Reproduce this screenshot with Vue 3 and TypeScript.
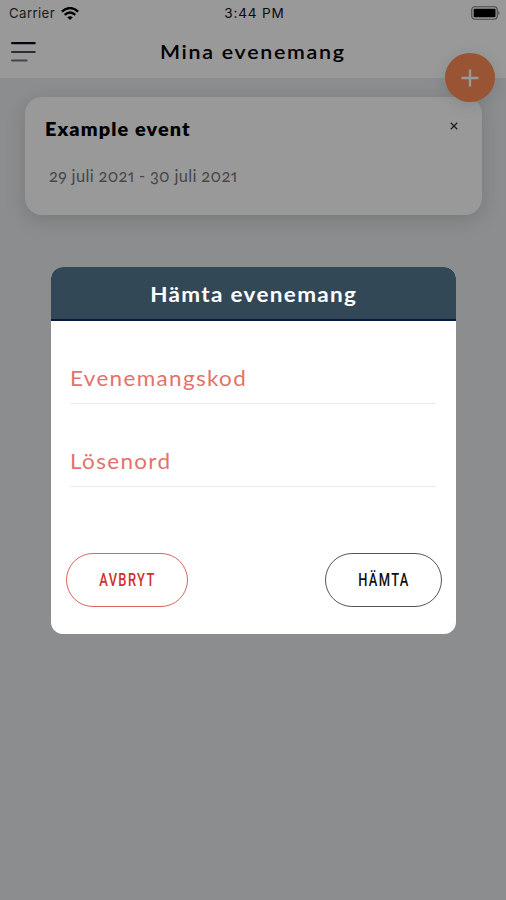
<script setup lang="ts">
import { ref } from 'vue'

interface EventItem {
  name: string
  period: string
}

const events = ref<EventItem[]>([{ name: 'Example event', period: '29 juli 2021 - 30 juli 2021' }])
const fields: string[] = ['Evenemangskod', 'Lösenord']
</script>

<template>
  <main class="screen">
    <div class="status">
      <div class="carrier">
        <span>Carrier</span>
        <svg width="18" height="13" viewBox="0 0 18 13" fill="none" stroke="#000" stroke-width="2.3">
          <path d="M.8 4.7Q9-2.6 17.2 4.7M3.7 7.9Q9 3.2 14.3 7.9" />
          <path d="M6.2 10.3Q9 8 11.8 10.3L9 13Z" fill="#000" stroke="none" />
        </svg>
      </div>
      <span class="clock">3:44 PM</span>
      <svg class="battery" width="29" height="14" viewBox="0 0 29 14">
        <rect x=".75" y=".75" width="25.5" height="12.5" rx="3" fill="none" stroke="#777" stroke-width="1.1" />
        <rect x="2.7" y="2.7" width="21.8" height="8.6" rx="1" fill="#000" />
        <path d="M27.4 4.8Q29.6 7 27.4 9.2Z" fill="#777" />
      </svg>
    </div>
    <header class="bar">
      <svg class="menu" width="25" height="22" viewBox="0 0 25 22" stroke-width="2.2" stroke-linecap="round">
        <path d="M1.1 2.2H23.7" stroke="#080820" />
        <path d="M1.1 11H23.7" stroke="#4b4b5c" />
        <path d="M1.1 19.5H15.5" stroke="#707078" />
      </svg>
      <h1><span class="wide">Mina evenemang</span></h1>
    </header>
    <section class="list">
      <article v-for="event in events" :key="event.name" class="card">
        <div class="card-head">
          <h2><span class="wide">{{ event.name }}</span></h2>
          <svg width="8" height="8" viewBox="0 0 8 8" stroke="#333" stroke-width="1.3">
            <path d="M.8.8L7.2 7.2M7.2.8L.8 7.2" />
          </svg>
        </div>
        <p>{{ event.period }}</p>
      </article>
    </section>
    <button class="fab" aria-label="Lägg till">
      <svg width="18" height="18" viewBox="0 0 18 18" stroke="#fff" stroke-width="2.4">
        <path d="M9 .5V17.5M.5 9H17.5" />
      </svg>
    </button>
    <div class="overlay">
      <form class="modal" @submit.prevent>
        <h3><span class="wide">Hämta evenemang</span></h3>
        <div class="fields">
          <label v-for="field in fields" :key="field" class="field">
            <span class="wide">{{ field }}</span>
          </label>
        </div>
        <div class="actions">
          <button type="button" class="pill cancel"><span>AVBRYT</span></button>
          <button type="submit" class="pill fetch"><span>HÄMTA</span></button>
        </div>
      </form>
    </div>
  </main>
</template>

<style>
body {
  margin: 0;
}
</style>

<style scoped>
* {
  box-sizing: border-box;
}
h1, h2, h3, p {
  margin: 0;
  white-space: nowrap;
}
button {
  padding: 0;
  background: none;
  border: 0;
}
svg {
  display: block;
  flex: none;
}
.wide {
  display: inline-block;
  transform: scaleX(1.07);
}
h2 .wide, .field .wide {
  transform-origin: left center;
}
.screen {
  position: relative;
  width: 506px;
  height: 900px;
  overflow: hidden;
  background: #e8ebed;
  font-family: Lato, "Open Sans", sans-serif;
}
.status {
  display: grid;
  grid-template-columns: 1fr auto 1fr;
  align-items: center;
  height: 26px;
  padding: 0 6px 0 9px;
  background: #fff;
  font: 13.3px/26px Inter, sans-serif;
  color: #111;
}
.carrier {
  display: flex;
  align-items: center;
  gap: 6px;
  color: #333;
}
.carrier span {
  letter-spacing: 0.35px;
}
.clock {
  font-size: 13.6px;
  letter-spacing: 0.8px;
}
.battery {
  justify-self: end;
}
.bar {
  display: grid;
  grid-template-columns: 37px 1fr 48px;
  align-items: center;
  height: 52px;
  padding: 0 0 0 11px;
  background: #fff;
}
h1 {
  height: 52px;
  font-size: 20px;
  line-height: 51px;
  font-weight: 600;
  letter-spacing: 1.6px;
  text-align: center;
  color: #000;
}
.list {
  padding: 19px 24px 0 25px;
}
.card {
  height: 118px;
  padding: 20px 24px 0 20px;
  border-radius: 17px;
  background: #fff;
  box-shadow: 0 5px 20px rgba(60, 75, 75, 0.2);
}
.card-head {
  display: flex;
  justify-content: space-between;
  align-items: flex-start;
}
.card-head svg {
  margin-top: 5px;
}
h2 {
  font-size: 18.5px;
  line-height: 24px;
  font-weight: 800;
  letter-spacing: 1.05px;
  color: #000;
}
.card p {
  margin: 23px 0 0 4px;
  font-size: 16.5px;
  line-height: 24px;
  letter-spacing: 0.32px;
  font-variant-numeric: oldstyle-nums proportional-nums;
  color: #777;
}
.fab {
  position: absolute;
  left: 445px;
  top: 53px;
  display: grid;
  place-items: center;
  width: 50px;
  height: 49px;
  border-radius: 50%;
  background: #ff8d55;
  box-shadow: 0 3px 16px rgba(60, 75, 75, 0.16);
}
.overlay {
  position: absolute;
  inset: 0;
  padding: 267px 50px 0 51px;
  background: rgba(0, 0, 0, 0.4);
}
.modal {
  height: 367px;
  overflow: hidden;
  border-radius: 12px;
  background: #fff;
}
h3 {
  height: 54px;
  border-bottom: 2px solid #061b3d;
  background: #324857;
  font-size: 21px;
  line-height: 54px;
  font-weight: 700;
  letter-spacing: 1.25px;
  text-align: center;
  color: #fff;
}
.fields {
  padding: 0 20px 0 19px;
}
.field {
  display: flex;
  align-items: flex-end;
  height: 83px;
  padding: 0 0 10px;
  border-bottom: 1px solid #ebebeb;
  font-size: 21px;
  line-height: 30px;
  letter-spacing: 1.25px;
  color: #e4716b;
}
.actions {
  display: flex;
  justify-content: space-between;
  padding: 66px 14px 0 15px;
}
.pill {
  display: grid;
  place-items: center;
  height: 54px;
  border: 1px solid currentColor;
  border-radius: 27px;
  font: 500 19px/24px Roboto, sans-serif;
  letter-spacing: 2px;
}
.pill span {
  transform: scaleX(0.68);
}
.cancel {
  width: 122px;
  border-color: #d9655f;
  color: #cf2f2b;
}
.fetch {
  width: 117px;
  border-color: #555;
  color: #111;
}
</style>
